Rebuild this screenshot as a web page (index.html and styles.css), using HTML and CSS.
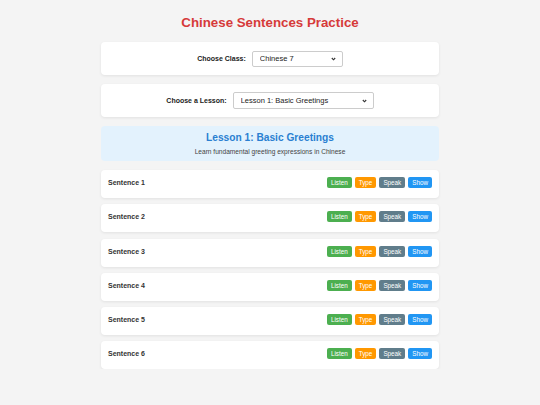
FILE: index.html
```html
<!DOCTYPE html>
<html lang="en">
<head>
<meta charset="utf-8">
<title>Chinese Sentences Practice</title>
<link rel="stylesheet" href="styles.css">
</head>
<body>
<div class="container">
  <h1 class="title">Chinese Sentences Practice</h1>

  <div class="card selector">
    <label class="sel-label" for="cls">Choose Class:</label>
    <select id="cls" class="sel sel-class">
      <option>Chinese 7</option>
    </select>
  </div>

  <div class="card selector">
    <label class="sel-label" for="les">Choose a Lesson:</label>
    <select id="les" class="sel sel-lesson">
      <option>Lesson 1: Basic Greetings</option>
    </select>
  </div>

  <div class="lesson-head">
    <h2 class="lesson-title">Lesson 1: Basic Greetings</h2>
    <p class="lesson-desc">Learn fundamental greeting expressions in Chinese</p>
  </div>

  <div class="sentences">
    <div class="row"><span class="row-label">Sentence 1</span><div class="btns"><button class="btn listen">Listen</button><button class="btn type">Type</button><button class="btn speak">Speak</button><button class="btn show">Show</button></div></div>
    <div class="row"><span class="row-label">Sentence 2</span><div class="btns"><button class="btn listen">Listen</button><button class="btn type">Type</button><button class="btn speak">Speak</button><button class="btn show">Show</button></div></div>
    <div class="row"><span class="row-label">Sentence 3</span><div class="btns"><button class="btn listen">Listen</button><button class="btn type">Type</button><button class="btn speak">Speak</button><button class="btn show">Show</button></div></div>
    <div class="row"><span class="row-label">Sentence 4</span><div class="btns"><button class="btn listen">Listen</button><button class="btn type">Type</button><button class="btn speak">Speak</button><button class="btn show">Show</button></div></div>
    <div class="row"><span class="row-label">Sentence 5</span><div class="btns"><button class="btn listen">Listen</button><button class="btn type">Type</button><button class="btn speak">Speak</button><button class="btn show">Show</button></div></div>
    <div class="row"><span class="row-label">Sentence 6</span><div class="btns"><button class="btn listen">Listen</button><button class="btn type">Type</button><button class="btn speak">Speak</button><button class="btn show">Show</button></div></div>
  </div>
</div>
</body>
</html>
```

FILE: styles.css
```css
* { box-sizing: border-box; }

body {
  margin: 0;
  background: #f4f4f4;
  font-family: "Liberation Sans", Arial, sans-serif;
  color: #333;
}

.container {
  width: 338px;
  margin: 0 auto;
  padding-top: 14px;
}

.title {
  margin: 0 0 10px;
  font-size: 13.3px;
  line-height: 18px;
  text-align: center;
  color: #d63a3a;
  font-weight: bold;
}

.card {
  background: #fff;
  border-radius: 4px;
  box-shadow: 0 1px 3px rgba(0, 0, 0, 0.08);
}

.selector {
  height: 33px;
  margin-bottom: 9px;
  display: flex;
  align-items: center;
  justify-content: center;
  gap: 6px;
}

.sel-label {
  font-size: 7px;
  font-weight: bold;
  color: #222;
}

.sel {
  appearance: none;
  -webkit-appearance: none;
  height: 17px;
  border: 1px solid #ccc;
  border-radius: 2px;
  background: #fff url("data:image/svg+xml;utf8,<svg xmlns='http://www.w3.org/2000/svg' width='5' height='4' viewBox='0 0 5 4'><path d='M0.8 1l1.7 1.8 1.7-1.8' fill='none' stroke='%23333' stroke-width='1.1'/></svg>") no-repeat right 6px center;
  font-family: "Liberation Sans", Arial, sans-serif;
  font-size: 7.5px;
  color: #222;
  padding: 0 14px 0 7px;
}

.sel-class { width: 91px; height: 16px; }
.sel-lesson { width: 141px; }

.lesson-head {
  background: #e3f2fd;
  border-radius: 4px;
  height: 35px;
  margin-bottom: 9px;
  text-align: center;
  padding-top: 5px;
}

.lesson-title {
  margin: 0;
  font-size: 10.2px;
  line-height: 14px;
  color: #2a7fd1;
  font-weight: bold;
}

.lesson-desc {
  margin: 2px 0 0;
  font-size: 6.6px;
  line-height: 10px;
  color: #444;
}

.sentences {
  display: flex;
  flex-direction: column;
  gap: 6.3px;
}

.row {
  background: #fff;
  border-radius: 4px;
  box-shadow: 0 1px 3px rgba(0, 0, 0, 0.08);
  height: 28px;
  padding: 7px 7px 0 7px;
  display: flex;
  justify-content: space-between;
  align-items: flex-start;
}

.row-label {
  font-size: 7px;
  font-weight: bold;
  line-height: 11px;
  color: #333;
}

.btns {
  display: flex;
  gap: 3px;
}

.btn {
  border: 0;
  border-radius: 2px;
  height: 11px;
  padding: 0 4px;
  font-family: "Liberation Sans", Arial, sans-serif;
  font-size: 6.3px;
  line-height: 11px;
  color: #fff;
}

.listen { background: #4caf50; }
.type { background: #ff9800; }
.speak { background: #607d8b; }
.show { background: #2196f3; }
```
